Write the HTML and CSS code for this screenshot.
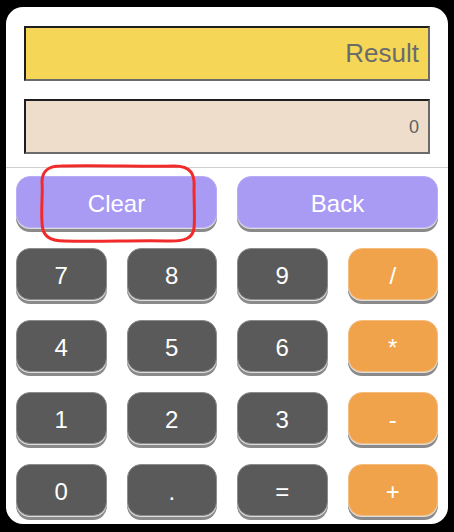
FILE: index.html
```html
<!DOCTYPE html>
<html>
<head>
<meta charset="utf-8">
<link rel="stylesheet" href="styles.css">
</head>
<body>
<div class="calc">
  <div class="displays">
    <div class="display result">Result</div>
    <div class="display input">0</div>
  </div>
  <div class="keys">
    <button class="key wide purple">Clear</button>
    <button class="key wide purple">Back</button>
    <button class="key dark">7</button>
    <button class="key dark">8</button>
    <button class="key dark">9</button>
    <button class="key orange">/</button>
    <button class="key dark">4</button>
    <button class="key dark">5</button>
    <button class="key dark">6</button>
    <button class="key orange">*</button>
    <button class="key dark">1</button>
    <button class="key dark">2</button>
    <button class="key dark">3</button>
    <button class="key orange">-</button>
    <button class="key dark">0</button>
    <button class="key dark">.</button>
    <button class="key dark">=</button>
    <button class="key orange">+</button>
  </div>
  <svg class="annot" width="160" height="80" viewBox="0 0 160 80">
    <path d="M22 2 C60 1 110 3 135 2 C152 2 156 10 155 24 C155 38 156 56 155 64 C154 74 146 77 132 77 C100 76 60 78 26 77 C10 77 3 72 3 58 C2 44 4 28 3 18 C3 6 10 2 22 2 Z" fill="none" stroke="#f22a2a" stroke-width="3" stroke-linejoin="round"/>
  </svg>
</div>
</body>
</html>
```
FILE: styles.css
```css
html, body {
  margin: 0;
  padding: 0;
  background: #000;
}
body {
  padding: 7px 6px 8px 6px;
  font-family: "Liberation Sans", Arial, sans-serif;
}
.calc {
  position: relative;
  width: 442px;
  height: 517px;
  background: #fff;
  border-radius: 17px;
  box-sizing: border-box;
  overflow: hidden;
}
.displays {
  display: flex;
  flex-direction: column;
  gap: 18px;
  padding: 19px 18px 13px 18px;
  border-bottom: 1.5px solid #cfcfcf;
}
.display {
  height: 55px;
  box-sizing: border-box;
  border-style: solid;
  border-width: 2px;
  border-color: #1e1e1e #6a6a6a #6a6a6a #1e1e1e;
  display: flex;
  align-items: center;
  justify-content: flex-end;
  padding-right: 9px;
  color: #6b6b6b;
}
.result {
  background: #f5d657;
  font-size: 26px;
}
.input {
  background: #eeddcb;
  font-size: 18px;
  color: #5f5f5f;
  padding-top: 2px;
}
.keys {
  display: grid;
  grid-template-columns: repeat(4, 1fr);
  column-gap: 20px;
  row-gap: 20px;
  padding: 8px 10px 0 10px;
}
.key {
  height: 52px;
  border-radius: 14px;
  font-family: "Liberation Sans", Arial, sans-serif;
  font-size: 24px;
  color: #fff;
  border: 1px solid transparent;
  box-shadow: 0 1px 0 #dedede, 0 4px 0 #8a8a8a;
  padding: 0;
  padding-top: 3px;
}
.wide {
  grid-column: span 2;
}
.purple {
  background: #a99bf4;
  border-color: #b7acf6;
}
.dark {
  background: #5a5a5a;
  border-color: #8c8c8c;
}
.orange {
  background: #f0a34a;
  border-color: #f4bd80;
}
.annot {
  position: absolute;
  left: 33px;
  top: 157px;
  pointer-events: none;
}
```
